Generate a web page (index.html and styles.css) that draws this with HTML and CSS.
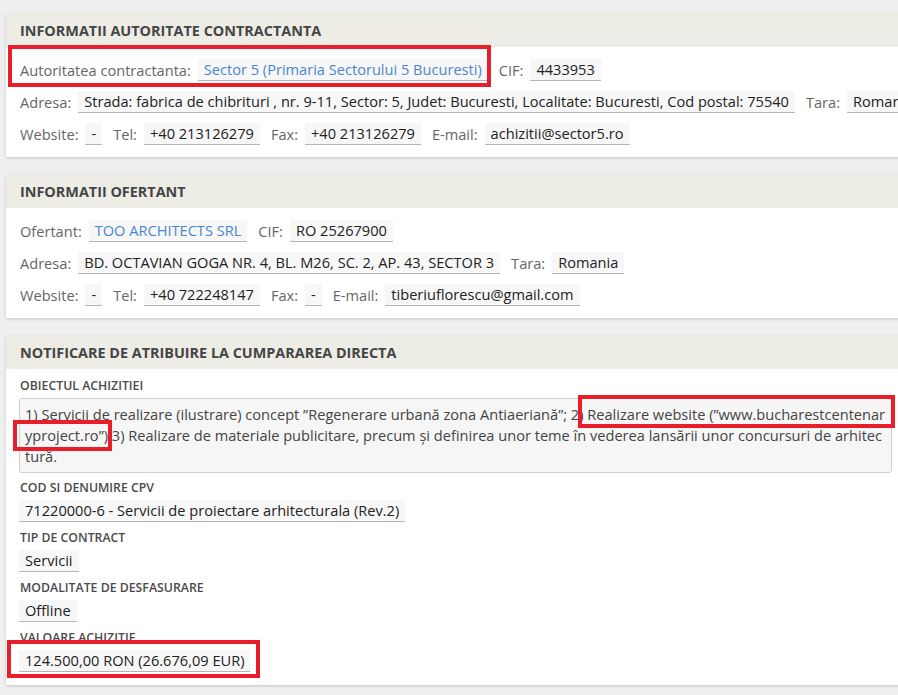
FILE: index.html
```html
<html>
<head>
    <meta charset="UTF-8">
    <title>Notificare de atribuire</title>
    <link rel="stylesheet" href="styles.css">
</head>
<body>
    <div class="page">
        <div class="panel">
            <div class="panel-title">INFORMATII AUTORITATE CONTRACTANTA</div>
            <div class="panel-body">
                <div class="row">
                    <span class="lbl">Autoritatea contractanta:</span>
                    <span class="val link">Sector 5 (Primaria Sectorului 5 Bucuresti)</span>
                    <span class="lbl">CIF:</span>
                    <span class="val">4433953</span>
                </div>
                <div class="row">
                    <span class="lbl">Adresa:</span>
                    <span class="val">Strada: fabrica de chibrituri , nr. 9-11, Sector: 5, Judet: Bucuresti, Localitate: Bucuresti, Cod postal: 75540</span>
                    <span class="lbl">Tara:</span>
                    <span class="val">Romania</span>
                </div>
                <div class="row">
                    <span class="lbl">Website:</span>
                    <span class="val">-</span>
                    <span class="lbl">Tel:</span>
                    <span class="val">+40 213126279</span>
                    <span class="lbl">Fax:</span>
                    <span class="val">+40 213126279</span>
                    <span class="lbl">E-mail:</span>
                    <span class="val">achizitii@sector5.ro</span>
                </div>
            </div>
        </div>

        <div class="panel">
            <div class="panel-title">INFORMATII OFERTANT</div>
            <div class="panel-body">
                <div class="row">
                    <span class="lbl">Ofertant:</span>
                    <span class="val link">TOO ARCHITECTS SRL</span>
                    <span class="lbl">CIF:</span>
                    <span class="val">RO 25267900</span>
                </div>
                <div class="row">
                    <span class="lbl">Adresa:</span>
                    <span class="val">BD. OCTAVIAN GOGA NR. 4, BL. M26, SC. 2, AP. 43, SECTOR 3</span>
                    <span class="lbl">Tara:</span>
                    <span class="val">Romania</span>
                </div>
                <div class="row">
                    <span class="lbl">Website:</span>
                    <span class="val">-</span>
                    <span class="lbl">Tel:</span>
                    <span class="val">+40 722248147</span>
                    <span class="lbl">Fax:</span>
                    <span class="val">-</span>
                    <span class="lbl">E-mail:</span>
                    <span class="val">tiberiuflorescu@gmail.com</span>
                </div>
            </div>
        </div>

        <div class="panel">
            <div class="panel-title">NOTIFICARE DE ATRIBUIRE LA CUMPARAREA DIRECTA</div>
            <div class="panel-body stacked">
                <div class="field-lbl">OBIECTUL ACHIZITIEI</div>
                <div class="textbox">1) Servicii de realizare (ilustrare) concept ”Regenerare urbană zona Antiaeriană”; 2) Realizare website (”www.bucharestcentenaryproject.ro”) 3) Realizare de materiale publicitare, precum și definirea unor teme în vederea lansării unor concursuri de arhitectură.</div>

                <div class="field">
                    <div class="field-lbl">COD SI DENUMIRE CPV</div>
                    <span class="val">71220000-6 - Servicii de proiectare arhitecturala (Rev.2)</span>
                </div>
                <div class="field">
                    <div class="field-lbl">TIP DE CONTRACT</div>
                    <span class="val">Servicii</span>
                </div>
                <div class="field">
                    <div class="field-lbl">MODALITATE DE DESFASURARE</div>
                    <span class="val">Offline</span>
                </div>
                <div class="field">
                    <div class="field-lbl">VALOARE ACHIZITIE</div>
                    <span class="val">124.500,00 RON (26.676,09 EUR)</span>
                </div>
            </div>
        </div>

        <!-- highlight frames drawn on top of the page -->
        <div class="mark mark-authority"></div>
        <div class="mark mark-site-a"></div>
        <div class="mark mark-site-b"></div>
        <div class="mark mark-value"></div>
    </div>
</body>
</html>
```

FILE: styles.css
```css
html, body {
    overflow: hidden;
}

body {
    margin: 0;
    background-color: #efefef;
    font-family: 'Open Sans', 'Liberation Sans', sans-serif;
    font-size: 14.6px;
    color: #222;
}

.page {
    position: relative;
    padding: 14px 0 0 6px;
    width: 900px;
}

.panel {
    background: #fff;
    box-shadow: 0 1px 3px rgba(0, 0, 0, 0.18);
    margin-bottom: 18px;
}

.panel-title {
    background-color: #edece5;
    height: 33px;
    line-height: 33px;
    padding: 0 14px;
    font-size: 14.4px;
    font-weight: 700;
    color: #454545;
}

.panel-body {
    padding: 7px 14px 7px 14px;
}

.row {
    display: flex;
    align-items: center;
    height: 32px;
    white-space: nowrap;
}

.lbl {
    color: #666;
    margin-right: 7px;
}

.val {
    display: inline-block;
    background-color: #f7f7f7;
    border-bottom: 1px solid #b5b5b5;
    padding: 0 6px;
    line-height: 21px;
    margin-right: 11px;
    color: #222;
}

.val.link {
    color: #4a86cf;
}

/* stacked fields of the award notice */
.panel-body.stacked {
    padding: 9px 14px 13px 13px;
}

.field-lbl {
    font-size: 12.3px;
    font-weight: 600;
    color: #4a4a4a;
    line-height: 16px;
    margin: 0 0 4px 1px;
}

.textbox {
    background-color: #f6f6f6;
    border: 1px solid #cfcfcf;
    border-radius: 3px;
    padding: 5px 4px 5px 5px;
    line-height: 21px;
    color: #444;
    word-break: break-all;
    min-height: 61px;
    margin-bottom: 7px;
}

.field {
    margin-bottom: 8px;
}

.field:last-child {
    margin-bottom: 0;
}

.field .val {
    margin-right: 0;
}

.mark {
    position: absolute;
    border: 4px solid #e81f2a;
    box-sizing: border-box;
}

.mark-authority {
    left: 8px;
    top: 45px;
    width: 483px;
    height: 42px;
}

.mark-site-a {
    left: 578px;
    top: 395px;
    width: 317px;
    height: 33px;
}

.mark-site-b {
    left: 13px;
    top: 420px;
    width: 99px;
    height: 31px;
}

.mark-value {
    left: 7px;
    top: 640px;
    width: 253px;
    height: 38px;
}
```
